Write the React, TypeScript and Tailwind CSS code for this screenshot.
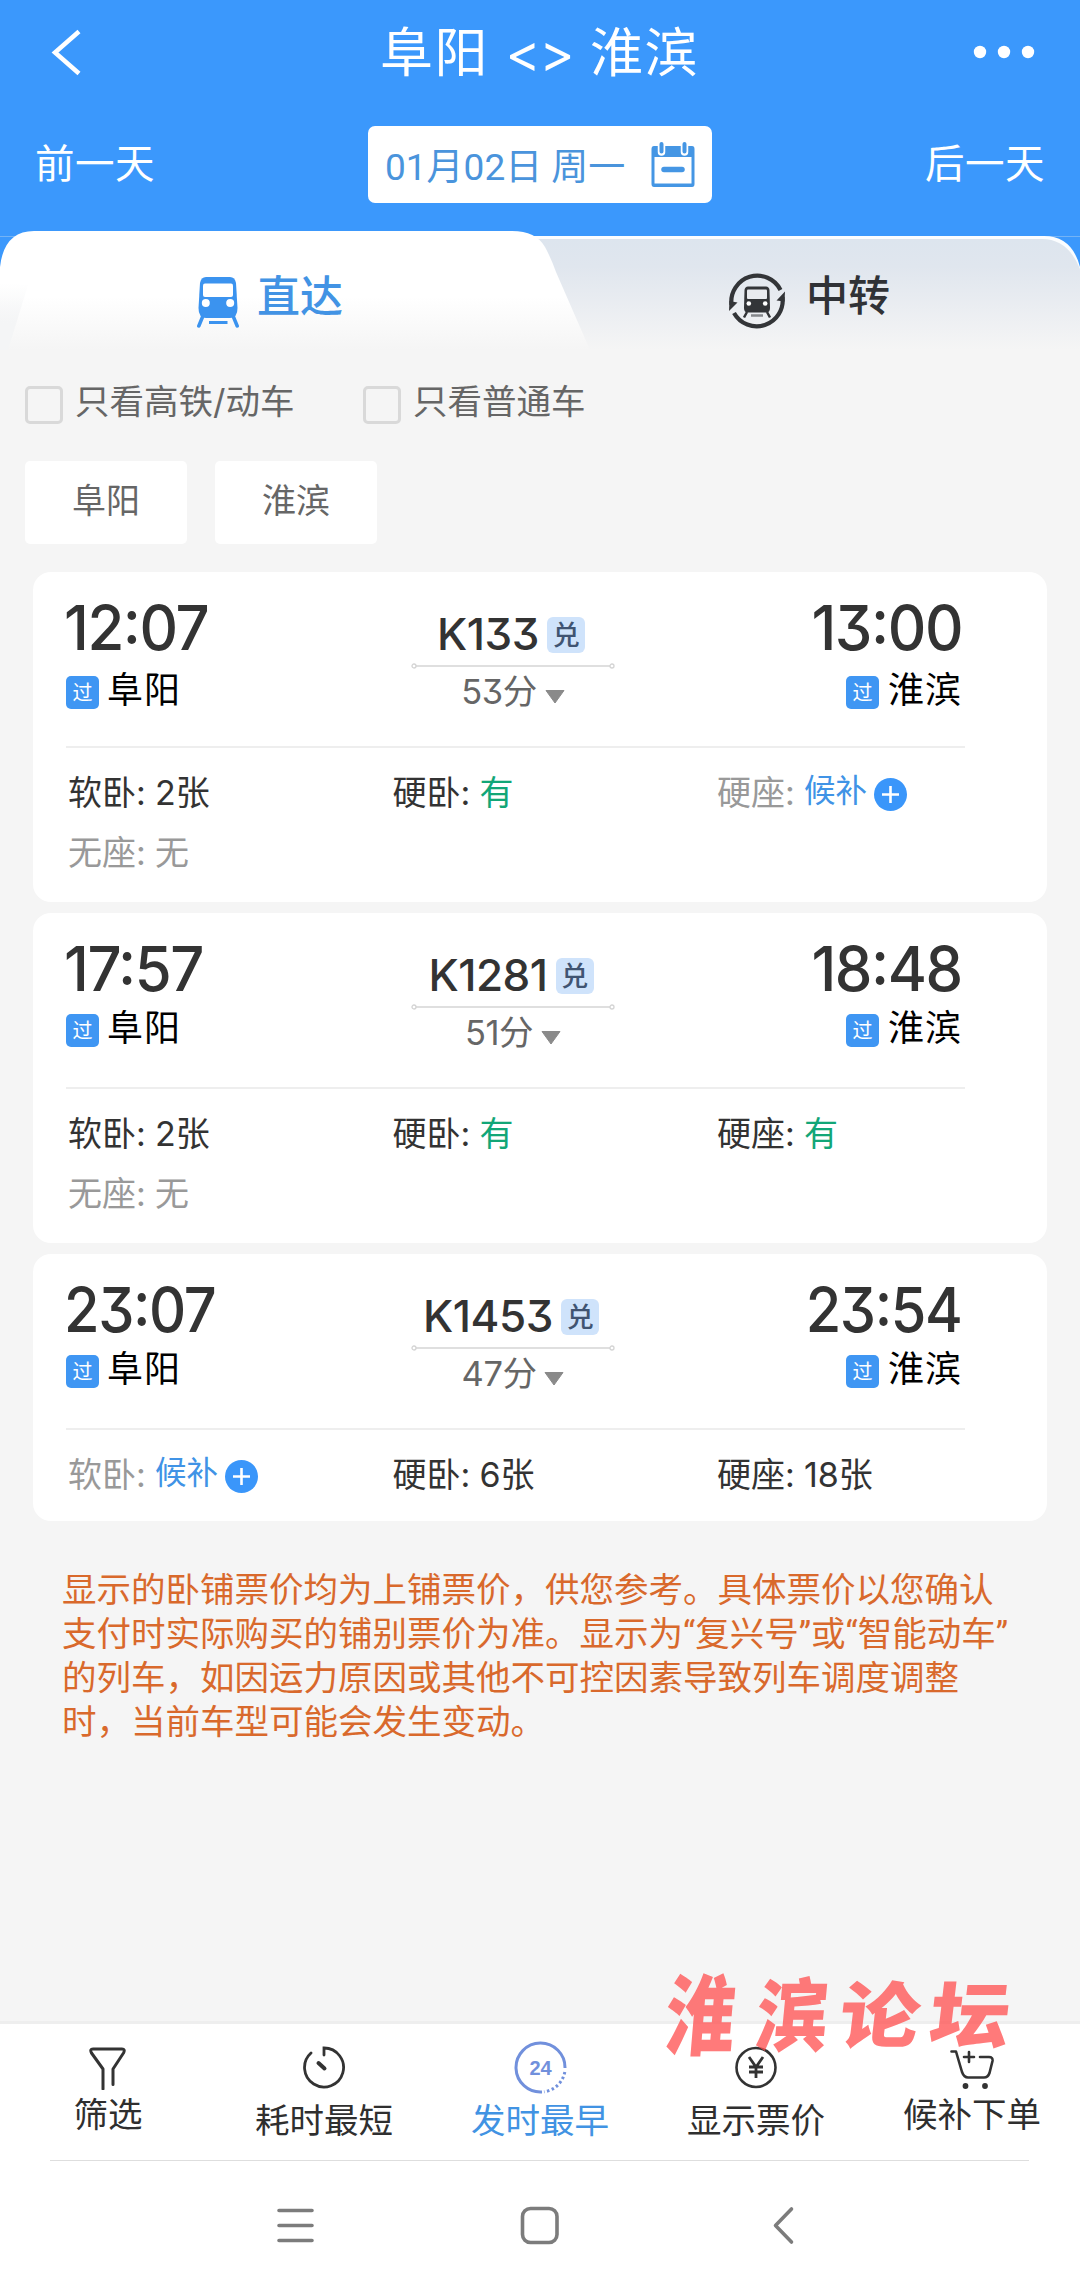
import type { ReactNode } from "react";

type Seat = { label: string; value?: string; kind?: "ok" | "wait" | "none" };
type Train = {
  depart: string;
  arrive: string;
  no: string;
  mins: string;
  seats: Seat[];
  stationPad: string;
  height: string;
  timeScale: string;
};

const trains: Train[] = [
  {
    depart: "12:07",
    arrive: "13:00",
    no: "K133",
    mins: "53分",
    stationPad: "pt-[12px]",
    height: "h-[330px]",
    timeScale: "scale-x-[0.965]",
    seats: [
      { label: "软卧:", value: "2张" },
      { label: "硬卧:", value: "有", kind: "ok" },
      { label: "硬座:", kind: "wait" },
      { label: "无座:", value: "无", kind: "none" },
    ],
  },
  {
    depart: "17:57",
    arrive: "18:48",
    no: "K1281",
    mins: "51分",
    stationPad: "pt-[9px]",
    height: "h-[330px]",
    timeScale: "scale-x-[0.965]",
    seats: [
      { label: "软卧:", value: "2张" },
      { label: "硬卧:", value: "有", kind: "ok" },
      { label: "硬座:", value: "有", kind: "ok" },
      { label: "无座:", value: "无", kind: "none" },
    ],
  },
  {
    depart: "23:07",
    arrive: "23:54",
    no: "K1453",
    mins: "47分",
    stationPad: "pt-[9px]",
    height: "h-[267px]",
    timeScale: "scale-x-[0.93]",
    seats: [
      { label: "软卧:", kind: "wait" },
      { label: "硬卧:", value: "6张" },
      { label: "硬座:", value: "18张" },
    ],
  },
];

function CalendarIcon() {
  return (
    <svg width="46" height="46" viewBox="0 0 46 46">
      <path d="M4 4H42Q44.500 4 44.500 7V42Q44.500 45 42 45H4Q1.500 45 1.500 42V7Q1.500 4 4 4Z" fill="#4596e4" />
      <rect x="4.500" y="15" width="37" height="26.500" fill="#fff" />
      <path d="M11.500 3V10M34.500 3V10" stroke="#fff" strokeWidth="7.500" strokeLinecap="round" />
      <path d="M11.500 2V9.500M34.500 2V9.500" stroke="#4596e4" strokeWidth="4" strokeLinecap="round" />
      <path d="M14 27.500H32" stroke="#4596e4" strokeWidth="5.500" strokeLinecap="round" />
    </svg>
  );
}

function TrainIcon() {
  return (
    <svg width="42" height="52" viewBox="0 0 42 52">
      <path d="M9 1H33Q38 1 39 7L40.500 32Q40.500 42 33 42H9Q1.500 42 1.500 32L3 7Q4 1 9 1Z" fill="#3b93ef" />
      <rect x="6" y="7.500" width="30" height="13.500" rx="2" fill="#fff" />
      <circle cx="8.800" cy="27" r="4" fill="#fff" />
      <circle cx="33.200" cy="27" r="4" fill="#fff" />
      <path d="M5.500 41L1.800 50M36.500 41L40.200 50" stroke="#3b93ef" strokeWidth="3.500" strokeLinecap="round" />
      <path d="M12 46.500H30.500" stroke="#3b93ef" strokeWidth="3" />
    </svg>
  );
}

function TransferIcon() {
  return (
    <svg width="58" height="58" viewBox="0 0 58 58">
      <g fill="none" stroke="#333538" strokeWidth="4.200">
        <path d="M3.500 33A26 26 0 0 1 52.500 18" />
        <path d="M54.500 25A26 26 0 0 1 6 41" />
      </g>
      <path d="M1 39L9.500 30.500L1.500 29Z" fill="#333538" />
      <path d="M57 19.500L48.500 28.500L56.500 29.500Z" fill="#333538" />
      <path d="M20 14.500H38Q41 14.500 41.500 18L42 36Q42 40.500 38 40.500H20Q16 40.500 16 36L16.500 18Q17 14.500 20 14.500Z" fill="#333538" />
      <rect x="19" y="17.500" width="20" height="9.500" rx="1" fill="#e9ebef" />
      <circle cx="20.800" cy="31.500" r="2.300" fill="#fff" />
      <circle cx="37.200" cy="31.500" r="2.300" fill="#fff" />
      <path d="M19 40L16 45.500M39 40L42 45.500" stroke="#333538" strokeWidth="2.500" />
      <path d="M23 43.500H35" stroke="#85878b" strokeWidth="2.500" />
    </svg>
  );
}

function Tabs() {
  return (
    <div className="relative -mt-[5px] h-[119px]">
      <svg className="absolute inset-0" width="1080" height="119" viewBox="0 0 1080 119">
        <defs>
          <linearGradient id="tabOff" x1="0" y1="0" x2="0" y2="1">
            <stop offset="0" stopColor="#dde5ee" />
            <stop offset="0.250" stopColor="#e0e6ee" />
            <stop offset="1" stopColor="#f5f5f5" />
          </linearGradient>
          <linearGradient id="tabOn" x1="0" y1="0" x2="0" y2="1">
            <stop offset="0.550" stopColor="#ffffff" />
            <stop offset="1" stopColor="#f5f5f5" />
          </linearGradient>
          <linearGradient id="tabEdge" x1="0" y1="0" x2="0" y2="1">
            <stop offset="0" stopColor="#f4f5f6" stopOpacity="0" />
            <stop offset="0.600" stopColor="#f4f5f6" />
          </linearGradient>
        </defs>
        <rect width="1080" height="80" fill="#3b98fc" />
        <rect y="5" width="1080" height="1" fill="#73b3f6" />
        <path d="M480 5H1044Q1072 5 1080 36V119H480Z" fill="#fbfdff" />
        <path d="M480 8H1042Q1068 8 1080 38V119H480Z" fill="url(#tabOff)" />
        <path d="M0 36Q4 0 34 0H512Q536 0 545 16Q551 27 556 41L590 119H0Z" fill="url(#tabOn)" />
        <path d="M0 52L28 54L8 119H0Z" fill="url(#tabEdge)" />
      </svg>
      <div className="relative grid grid-cols-2">
        <div className="flex h-[119px] items-center pt-[23px] pl-[197px] text-[43px] font-medium text-[#4293e4]">
          <TrainIcon />
          <span className="-mt-[12px] ml-[18px] leading-[50px]">直达</span>
        </div>
        <div className="flex h-[119px] items-center pt-[21px] pl-[188px] text-[42px] font-medium text-[#303236]">
          <TransferIcon />
          <span className="-mt-[10px] ml-[20px] leading-[50px]">中转</span>
        </div>
      </div>
    </div>
  );
}

function Pass() {
  return (
    <span className="mt-[4px] flex size-[33px] items-center justify-center rounded-[5px] bg-[#3f96f3] text-[20px] leading-none text-white">
      过
    </span>
  );
}

function SeatCell({ seat }: { seat: Seat }) {
  const muted = seat.kind === "wait" || seat.kind === "none";
  return (
    <div className={muted ? "flex h-[60px] items-center text-[#999]" : "flex h-[60px] items-center text-[#333]"}>
      <span className="w-[87px]">{seat.label}</span>
      {seat.kind === "wait" ? (
        <>
          <span className="-mt-[4px] w-[70px] text-[31.500px] text-[#4093e6]">候补</span>
          <svg className="mt-[3px]" width="33" height="33" viewBox="0 0 33 33">
            <circle cx="16.500" cy="16.500" r="16.500" fill="#3a96fa" />
            <path d="M8 16.500H25M16.500 8V25" stroke="#fff" strokeWidth="2.600" />
          </svg>
        </>
      ) : (
        <span className={seat.kind === "ok" ? "text-[#12a677]" : ""}>{seat.value}</span>
      )}
    </div>
  );
}

function TrainCard({ t }: { t: Train }) {
  return (
    <section className={`${t.height} rounded-[18px] bg-white pl-[33px]`}>
      <div className="flex h-[174px] w-[899px] justify-between border-b-2 border-[#eee] [box-sizing:content-box]">
        <div className="w-[300px] pt-[24px]">
          <div className={`${t.timeScale} -ml-[2px] origin-left text-[62px] leading-[64px] font-medium tracking-[-1.500px] text-[#333]`}>
            {t.depart}
          </div>
          <div className={`${t.stationPad} flex h-[60px] items-start text-[36px] leading-[36px] text-black`}>
            <Pass />
            <span className="ml-[8px] tracking-[1px]">阜阳</span>
          </div>
        </div>
        <div className="mr-[5px] flex w-[204px] flex-col items-center pt-[36px]">
          <div className="-mt-px mb-px flex h-[54px] items-center pr-[4px] text-[44px] leading-[54px] font-medium tracking-[-0.500px] whitespace-nowrap text-[#333]">
            {t.no}
            <span className="mt-[2px] ml-[8px] flex h-[36px] w-[38px] items-center justify-center rounded-[6px] bg-[#cfe3fb] text-[27px] leading-none text-[#405472]">
              兑
            </span>
          </div>
          <svg width="204" height="8" viewBox="0 0 204 8">
            <path d="M5 4H199" stroke="#d4d4d4" strokeWidth="1.500" />
            <circle cx="3" cy="4" r="2" fill="#fff" stroke="#d4d4d4" strokeWidth="1.300" />
            <circle cx="201" cy="4" r="2" fill="#fff" stroke="#d4d4d4" strokeWidth="1.300" />
          </svg>
          <div className="flex h-[44px] items-center text-[34.500px] leading-[44px] tracking-[-0.500px] text-[#666]">
            {t.mins}
            <svg className="mt-[9px] ml-[8px]" width="20" height="14" viewBox="0 0 20 14">
              <path d="M1 0.500H19L10 13Z" fill="#8a8a8a" stroke="#8a8a8a" strokeLinejoin="round" />
            </svg>
          </div>
        </div>
        <div className="flex w-[300px] flex-col items-end pt-[24px] pr-[3px]">
          <div className={`${t.timeScale} origin-right text-[62px] leading-[64px] font-medium tracking-[-1.500px] text-[#333]`}>
            {t.arrive}
          </div>
          <div className={`${t.stationPad} flex h-[60px] items-start text-[36px] leading-[36px] text-black`}>
            <Pass />
            <span className="ml-[9px] tracking-[1px]">淮滨</span>
          </div>
        </div>
      </div>
      <div className="ml-[2px] grid grid-cols-[324.500px_324.500px_330px] pt-[15px] text-[34px] leading-[44px]">
        {t.seats.map((s) => (
          <SeatCell key={s.label} seat={s} />
        ))}
      </div>
    </section>
  );
}

function BarItem({ icon, label, low, active }: { icon: ReactNode; label: string; low?: boolean; active?: boolean }) {
  return (
    <div
      className={
        "flex flex-col items-center pt-[15px] text-[34.500px] leading-[44px] " +
        (active ? "text-[#4193e3]" : "text-[#2f2f2f]")
      }
    >
      <div className="flex h-[56px] items-center">{icon}</div>
      <span className={low ? "mt-[4px]" : "-mt-[2px]"}>{label}</span>
    </div>
  );
}

function BottomBar() {
  return (
    <div className="relative border-t-[3px] border-[#eee] bg-white">
      <div className="grid h-[136px] grid-cols-5">
        <BarItem
          label="筛选"
          icon={
            <svg width="44" height="46" viewBox="0 0 44 46" fill="none" stroke="#333" strokeWidth="3" strokeLinecap="round" strokeLinejoin="round">
              <path d="M17 45V25L5.500 9Q3.500 5 7 5H36Q39.500 5 37.500 9L27 25V40.500" />
            </svg>
          }
        />
        <BarItem
          low
          label="耗时最短"
          icon={
            <svg width="44" height="44" viewBox="0 0 44 44" fill="none" stroke="#333" strokeWidth="2.800" strokeLinecap="round">
              <path d="M22 10V3A19.500 19.500 0 1 1 9 8" />
              <path d="M16.500 18L22.500 23.500" strokeWidth="4" />
            </svg>
          }
        />
        <BarItem
          low
          active
          label="发时最早"
          icon={
            <svg width="54" height="54" viewBox="0 0 54 54" fill="none" stroke="#7190dc" strokeWidth="3">
              <path d="M29 52A24.500 24.500 0 1 1 52 28" />
              <path d="M51.800 32A24.500 24.500 0 0 1 31 51.800" strokeDasharray="2.500 2.500" />
              <text x="27.500" y="35" textAnchor="middle" fontSize="20" fontWeight="700" fill="#7190dc" stroke="none" fontFamily="Liberation Sans, sans-serif">
                24
              </text>
            </svg>
          }
        />
        <BarItem
          low
          label="显示票价"
          icon={
            <svg width="44" height="44" viewBox="0 0 44 44" fill="none" stroke="#333" strokeWidth="2.600">
              <circle cx="22" cy="22.500" r="19.500" />
              <path d="M15 12L22 22L29 12M22 22V33M15 22H29M15 27H29" strokeWidth="2.800" />
            </svg>
          }
        />
        <BarItem
          label="候补下单"
          icon={
            <svg width="44" height="44" viewBox="0 0 44 44" fill="none" stroke="#333" strokeWidth="2.600" strokeLinecap="round" strokeLinejoin="round">
              <path d="M1.500 6.500H6L12 27Q14 32.500 18 32.500H34Q38 32.500 39.500 28L42.500 16Q43 12 39 12H30" />
              <path d="M19 7V17M14 12H24" />
              <circle cx="15.500" cy="41" r="1.600" fill="#333" />
              <circle cx="35" cy="41" r="1.600" fill="#333" />
            </svg>
          }
        />
      </div>
      <div className="mr-[51px] ml-[50px] h-px bg-[#dedede]" />
      <div className="absolute -top-[58px] left-[660px] flex text-[80px] leading-[100px] font-black whitespace-nowrap text-[#ff4d4d]/75">
        <span className="w-[92px] -skew-x-6 scale-x-[0.87] scale-y-110">淮</span>
        <span className="w-[88px] -skew-x-6 scale-x-[0.9]">滨</span>
        <span className="w-[90px] -skew-x-6 scale-y-90">论</span>
        <span className="-skew-x-6 scale-y-90">坛</span>
      </div>
    </div>
  );
}

export default function App() {
  return (
    <div
      lang="zh-CN"
      className="flex h-[2290px] w-[1080px] flex-col overflow-hidden bg-[#f5f5f5] font-[Inter,'Noto_Sans_CJK_SC',sans-serif] [font-feature-settings:'cv09','calt']"
    >
      <header className="h-[236px] shrink-0 bg-[#3b98fc] text-white">
        <div className="flex h-[104px] items-center justify-between pr-[44px] pl-[50px]">
          <svg width="57" height="48" viewBox="0 0 57 48" fill="none" stroke="#fff" strokeWidth="4.500">
            <path d="M29 3.500L5 24.500L29 45.500" />
          </svg>
          <h1 className="pt-[2px] text-[53px] leading-[60px] font-normal tracking-[1.500px] whitespace-nowrap">
            阜阳 <span className="tracking-[-1px]">&lt;&gt;</span> 淮滨
          </h1>
          <svg width="64" height="14" viewBox="0 0 64 14" fill="#fff">
            <circle cx="8" cy="7" r="6.200" />
            <circle cx="32" cy="7" r="6.200" />
            <circle cx="56" cy="7" r="6.200" />
          </svg>
        </div>
        <div className="flex justify-between px-[35px] pt-[22px] text-[39.500px]">
          <span className="pt-[12px] leading-[52px] tracking-[0.5px]">前一天</span>
          <div className="flex h-[77px] w-[344px] items-center rounded-[7px] bg-white pl-[17px] text-[37px] text-[#4a94dc]">
            <span className="mt-[6px] w-[265px] font-[Roboto,'Noto_Sans_CJK_SC',sans-serif] leading-[44px] whitespace-nowrap">
              01月02日 周一
            </span>
            <CalendarIcon />
          </div>
          <span className="pt-[12px] leading-[52px] tracking-[0.5px]">后一天</span>
        </div>
      </header>
      <Tabs />
      <div className="flex pt-[28px] pl-[25px] text-[34.500px] leading-[48px] text-[#666]">
        <label className="flex w-[338px] items-center">
          <span className="mt-[6px] mr-[12px] size-[38px] rounded-[5px] border-[3px] border-[#d9d9d9]" />
          只看高铁/动车
        </label>
        <label className="flex items-center">
          <span className="mt-[6px] mr-[12px] size-[38px] rounded-[5px] border-[3px] border-[#d9d9d9]" />
          只看普通车
        </label>
      </div>
      <div className="flex gap-[28px] pt-[35px] pl-[25px] text-[34px] leading-[80px] text-[#666]">
        <span className="h-[83px] w-[162px] rounded-[5px] bg-white text-center">阜阳</span>
        <span className="h-[83px] w-[162px] rounded-[5px] bg-white text-center">淮滨</span>
      </div>
      <main className="flex flex-col gap-[11px] pt-[28px] pr-[33px] pl-[33px]">
        {trains.map((t) => (
          <TrainCard key={t.no} t={t} />
        ))}
      </main>
      <p className="pt-[47px] pl-[62px] font-[Roboto,'Noto_Sans_CJK_SC',sans-serif] text-[34.500px] leading-[44px] whitespace-nowrap text-[#d9692c]">
        显示的卧铺票价均为上铺票价，供您参考。具体票价以您确认
        <br />
        支付时实际购买的铺别票价为准。显示为“复兴号”或“智能动车”
        <br />
        的列车，如因运力原因或其他不可控因素导致列车调度调整
        <br />
        时，当前车型可能会发生变动。
      </p>
      <div className="mt-auto">
        <BottomBar />
        <nav className="grid h-[129px] grid-cols-[162px_243px_270px_243px_162px] bg-white">
          <span />
          <svg className="mt-[44px] ml-[112px]" width="44" height="44" viewBox="0 0 44 44" stroke="#7c7c7c" strokeWidth="3.600" strokeLinecap="round">
            <path d="M5 5.500H38M5 20.500H38M5 35.500H38" />
          </svg>
          <svg className="mt-[42px] ml-[112px]" width="46" height="46" viewBox="0 0 46 46" fill="none" stroke="#7c7c7c" strokeWidth="3.600">
            <rect x="5.500" y="5.500" width="34.500" height="34" rx="8" />
          </svg>
          <svg className="mt-[43px] ml-[94px]" width="44" height="44" viewBox="0 0 44 44" fill="none" stroke="#7c7c7c" strokeWidth="3.600" strokeLinecap="round" strokeLinejoin="round">
            <path d="M22.500 5L6.500 21.500L22.500 38" />
          </svg>
          <span />
        </nav>
      </div>
    </div>
  );
}
